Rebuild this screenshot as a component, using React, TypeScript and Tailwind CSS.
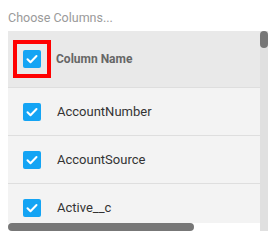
const rows = ["AccountNumber", "AccountSource", "Active__c"];

function Check() {
  return (
    <span className="flex h-[18px] w-[18px] shrink-0 items-center justify-center rounded-[2px] bg-[#14a4f4]">
      <svg viewBox="0 0 18 18" className="h-[18px] w-[18px]" fill="none">
        <path d="M4.5 9.3l3 3L13.5 6" stroke="white" strokeWidth="2" strokeLinecap="round" strokeLinejoin="round" />
      </svg>
    </span>
  );
}

export default function App() {
  return (
    <div className="h-[245px] w-[278px] bg-white pl-[8px] pt-[11px] font-['Roboto',sans-serif]">
      <div className="h-[20px] text-[12.5px] leading-[14px] text-[#9a9a9a]">Choose Columns...</div>
      <div className="flex h-[200px] w-[260px]">
        <div className="flex w-[252px] flex-col">
          <div className="h-[192px] overflow-hidden bg-[#f3f3f3]">
            <div className="flex h-[57px] items-center border-b border-[#dedede] bg-[#e9e9e9] pl-[5px]">
              <div className="border-4 border-[#ff0000] p-[6px]">
                <Check />
              </div>
              <span className="ml-[5px] text-[12px] font-bold text-[#666]">Column Name</span>
            </div>
            {rows.map((r) => (
              <div key={r} className="flex h-[48px] items-center border-b border-[#dedede] pl-[15px]">
                <Check />
                <span className="ml-[16px] text-[13px] text-[#333]">{r}</span>
              </div>
            ))}
          </div>
          <div className="h-[8px]">
            <div className="h-[8px] w-[186px] rounded-full bg-[#777]" />
          </div>
        </div>
        <div className="w-[8px] bg-[#e0e0e0]">
          <div className="h-[17px] w-[8px] rounded-full bg-[#777]" />
        </div>
      </div>
    </div>
  );
}
